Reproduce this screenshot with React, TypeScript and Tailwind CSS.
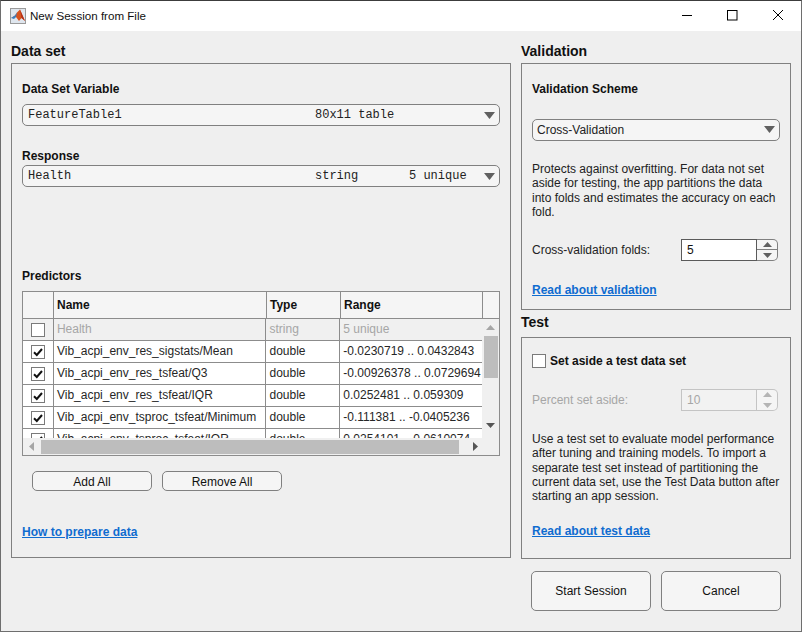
import React from "react";

const font = { fontFamily: '"Liberation Sans", Arial, sans-serif' };

function Dropdown({ a, b, c, top = "" }: { a: string; b: string; c?: string; top?: string }) {
  return (
    <div className={`h-[22px] w-[478px] rounded-[5px] border border-[#808080] bg-[#f5f5f5] flex items-center relative text-[12px] text-[#222] ${top}`} style={{ fontFamily: '"Liberation Mono", monospace' }}>
      <span className="absolute left-[5px]">{a}</span>
      <span className="absolute left-[292px]">{b}</span>
      {c && <span className="absolute left-[386px]">{c}</span>}
      <svg className="absolute left-[461px] top-[7px]" width="11" height="7" viewBox="0 0 11 7"><path d="M0 0H11L5.5 7Z" fill="#606060" /></svg>
    </div>
  );
}

function Check({ on, className = "" }: { on?: boolean; className?: string }) {
  return (
    <div className={`w-[14px] h-[14px] border border-[#7a7a7a] bg-white flex items-center justify-center shrink-0 ${className}`}>
      {on && (
        <svg width="12" height="12" viewBox="0 0 12 12"><path d="M2 6.2L4.8 9L10 3" fill="none" stroke="#111" strokeWidth="2" /></svg>
      )}
    </div>
  );
}

const rows = [
  ["Vib_acpi_env_res_sigstats/Mean", "double", "-0.0230719 .. 0.0432843"],
  ["Vib_acpi_env_res_tsfeat/Q3", "double", "-0.00926378 .. 0.0729694"],
  ["Vib_acpi_env_res_tsfeat/IQR", "double", "0.0252481 .. 0.059309"],
  ["Vib_acpi_env_tsproc_tsfeat/Minimum", "double", "-0.111381 .. -0.0405236"],
  ["Vib_acpi_env_tsproc_tsfeat/IQR", "double", "0.0254101 .. 0.0610074"],
];

function Row({ r, off }: { r: string[]; off?: boolean }) {
  return (
    <div className={`flex h-[22px] shrink-0 border-b border-[#8c8c8c] text-[12px] leading-[21px] ${off ? "bg-[#f0f0f0] text-[#a6a6a6]" : "bg-white text-[#262626]"}`}>
      <div className="w-[31px] border-r border-[#8c8c8c] flex items-center justify-center pl-[1px]"><Check on={!off} /></div>
      <div className="w-[213px] border-r border-[#8c8c8c] pl-[3px] whitespace-nowrap overflow-hidden">{r[0]}</div>
      <div className="w-[74px] border-r border-[#8c8c8c] pl-[3px]">{r[1]}</div>
      <div className="w-[142px] pl-[3px] whitespace-nowrap overflow-hidden">{r[2]}</div>
    </div>
  );
}

function Spinner({ value, off }: { value: string; off?: boolean }) {
  const arrow = off ? "#b5b5b5" : "#606060";
  const line = off ? "border-[#c4c4c4]" : "border-[#808080]";
  return (
    <div className="flex h-[22px] w-[97px]">
      <div className={`w-[76px] border ${off ? "border-[#c4c4c4] bg-[#f2f2f2] text-[#a6a6a6]" : "border-[#5a5a5a] bg-white text-[#111]"} pl-[5px] text-[12px] leading-[20px]`}>{value}</div>
      <div className={`w-[21px] border border-l-0 ${line} rounded-r-[5px] flex flex-col bg-[#f5f5f5]`}>
        <div className={`h-[10px] border-b ${off ? "border-transparent" : line} flex items-center justify-center`}>
          <svg width="9" height="5" viewBox="0 0 9 5"><path d="M0 5L4.5 0L9 5Z" fill={arrow} /></svg>
        </div>
        <div className="flex-1 flex items-center justify-center">
          <svg width="9" height="5" viewBox="0 0 9 5"><path d="M0 0L4.5 5L9 0Z" fill={arrow} /></svg>
        </div>
      </div>
    </div>
  );
}

function Link({ children, className = "" }: { children: React.ReactNode; className?: string }) {
  return <a className={`block font-bold text-[12px] leading-[15px] text-[#0f6cd0] underline whitespace-nowrap ${className}`}>{children}</a>;
}

function Btn({ children, className = "" }: { children: React.ReactNode; className?: string }) {
  return <div className={`border border-[#808080] rounded-[5px] bg-[#f5f5f5] flex items-center justify-center text-[12px] text-[#111] ${className}`}>{children}</div>;
}

export default function App() {
  return (
    <div className="w-[802px] h-[632px] bg-[#efefef] border border-[#6e6e6e] border-t-[#3c3c3c] flex flex-col overflow-hidden" style={font}>
      <div className="h-[30px] bg-white flex items-center shrink-0 pl-[9px]">
        <div className="w-[16px] h-[16px] border border-[#9a9a9a] bg-[#dfe6ee] flex items-center justify-center">
          <svg width="14" height="14" viewBox="0 0 14 14">
            <path d="M0 9L4 6.5L6 3.5L9 0.5L14 12L10.5 9L8 12L5 8Z" fill="#d9541e" />
            <path d="M0 9L4 6.5L6 3.5L5 8L3 10Z" fill="#3a7fc0" />
            <path d="M9 0.5L14 12L10.5 9Z" fill="#b3301a" />
          </svg>
        </div>
        <span className="ml-[4px] text-[11.6px] text-[#111]">New Session from File</span>
        <div className="ml-auto flex items-center">
          <svg width="46" height="14" viewBox="0 0 46 14"><path d="M19 6.5H29" stroke="#000" strokeWidth="1" /></svg>
          <svg width="46" height="14" viewBox="0 0 46 14"><rect x="18.5" y="1.5" width="9.5" height="9.5" fill="none" stroke="#000" /></svg>
          <svg width="46" height="14" viewBox="0 0 46 14"><path d="M18 1L28 11M28 1L18 11" stroke="#000" strokeWidth="1" /></svg>
        </div>
      </div>

      <div className="flex-1 flex pl-[10px] gap-[10px]">
        {/* left column */}
        <div className="w-[500px] flex flex-col">
          <h2 className="font-bold text-[14px] leading-[17px] mt-[12px] mb-[3px] text-[#111]">Data set</h2>
          <div className="w-[500px] h-[495px] border border-[#808080] pl-[10px] flex flex-col">
            <div className="font-bold text-[12px] leading-[15px] mt-[18px] text-[#111]">Data Set Variable</div>
            <Dropdown a="FeatureTable1" b="80x11 table" top="mt-[7px]" />
            <div className="font-bold text-[12px] leading-[15px] mt-[23px] text-[#111]">Response</div>
            <Dropdown a="Health" b="string" c="5 unique" top="mt-[1px]" />
            <div className="font-bold text-[12px] leading-[15px] mt-[82px] text-[#111]">Predictors</div>

            <div className="w-[478px] h-[165px] mt-[7px] border border-[#8c8c8c] flex flex-col bg-white overflow-hidden">
              <div className="flex h-[27px] shrink-0 border-b border-[#8c8c8c] bg-[#f5f5f5] font-bold text-[12px] leading-[27px] text-[#111]">
                <div className="w-[31px] border-r border-[#8c8c8c]" />
                <div className="w-[213px] border-r border-[#8c8c8c] pl-[3px]">Name</div>
                <div className="w-[74px] border-r border-[#8c8c8c] pl-[3px]">Type</div>
                <div className="w-[142px] border-r border-[#8c8c8c] pl-[3px]">Range</div>
              </div>
              <div className="flex h-[119px] shrink-0">
                <div className="w-[459px] overflow-hidden flex flex-col">
                  <Row off r={["Health", "string", "5 unique"]} />
                  {rows.map((r) => <Row key={r[0]} r={r} />)}
                </div>
                <div className="w-[17px] bg-[#f0f0f0] flex flex-col items-center">
                  <svg className="mt-[6px]" width="9" height="5" viewBox="0 0 9 5"><path d="M0 5L4.5 0L9 5Z" fill="#a6a6a6" /></svg>
                  <div className="w-[14px] h-[42px] bg-[#bdbdbd] mt-[6px]" />
                  <svg className="mt-[45px]" width="9" height="5" viewBox="0 0 9 5"><path d="M0 0L4.5 5L9 0Z" fill="#555" /></svg>
                </div>
              </div>
              <div className="flex-1 bg-[#f0f0f0] flex items-center">
                <svg className="ml-[6px]" width="5" height="9" viewBox="0 0 5 9"><path d="M5 0L0 4.5L5 9Z" fill="#a6a6a6" /></svg>
                <div className="w-[418px] h-[14px] bg-[#bdbdbd] ml-[7px]" />
                <svg className="ml-[14px]" width="5" height="9" viewBox="0 0 5 9"><path d="M0 0L5 4.5L0 9Z" fill="#555" /></svg>
              </div>
            </div>

            <div className="flex gap-[10px] ml-[10px] mt-[15px]">
              <Btn className="w-[120px] h-[20px] pt-[1px]">Add All</Btn>
              <Btn className="w-[120px] h-[20px] pt-[1px]">Remove All</Btn>
            </div>
            <Link className="mt-[34px]">How to prepare data</Link>
          </div>
        </div>

        {/* right column */}
        <div className="w-[270px] flex flex-col">
          <h2 className="font-bold text-[14px] leading-[17px] mt-[12px] mb-[3px] text-[#111]">Validation</h2>
          <div className="h-[247px] border border-[#808080] pl-[10px] flex flex-col">
            <div className="font-bold text-[12px] leading-[15px] mt-[18px] text-[#111]">Validation Scheme</div>
            <div className="relative w-[248px] h-[22px] mt-[22px] rounded-[5px] border border-[#808080] bg-[#f5f5f5] pl-[4px] text-[12px] leading-[20px] text-[#222]">
              Cross-Validation
              <svg className="absolute left-[231px] top-[6px]" width="11" height="7" viewBox="0 0 11 7"><path d="M0 0H11L5.5 7Z" fill="#606060" /></svg>
            </div>
            <p className="mt-[21px] text-[12px] leading-[14.3px] text-[#222] w-[256px]">
              Protects against overfitting. For data not set<br />aside for testing, the app partitions the data<br />into folds and estimates the accuracy on each<br />fold.
            </p>
            <div className="flex items-center mt-[20px]">
              <span className="w-[149px] text-[12px] text-[#222]">Cross-validation folds:</span>
              <Spinner value="5" />
            </div>
            <Link className="mt-[22px]">Read about validation</Link>
          </div>
          <h2 className="font-bold text-[14px] leading-[17px] mt-[4px] mb-[6px] text-[#111]">Test</h2>
          <div className="h-[222px] border border-[#808080] pl-[10px] flex flex-col">
            <div className="flex items-center mt-[14px]">
              <Check />
              <span className="ml-[4px] font-bold text-[12px] text-[#111]">Set aside a test data set</span>
            </div>
            <div className="flex items-center mt-[19px]">
              <span className="w-[149px] text-[12px] text-[#a6a6a6]">Percent set aside:</span>
              <Spinner value="10" off />
            </div>
            <p className="mt-[21px] text-[12px] leading-[14.3px] text-[#222] w-[256px] whitespace-nowrap">
              Use a test set to evaluate model performance<br />after tuning and training models. To import a<br />separate test set instead of partitioning the<br />current data set, use the Test Data button after<br />starting an app session.
            </p>
            <Link className="mt-[21px]">Read about test data</Link>
          </div>
          <div className="flex gap-[10px] ml-[10px] mt-[12px]">
            <Btn className="w-[120px] h-[40px]">Start Session</Btn>
            <Btn className="w-[120px] h-[40px]">Cancel</Btn>
          </div>
        </div>
      </div>
    </div>
  );
}
